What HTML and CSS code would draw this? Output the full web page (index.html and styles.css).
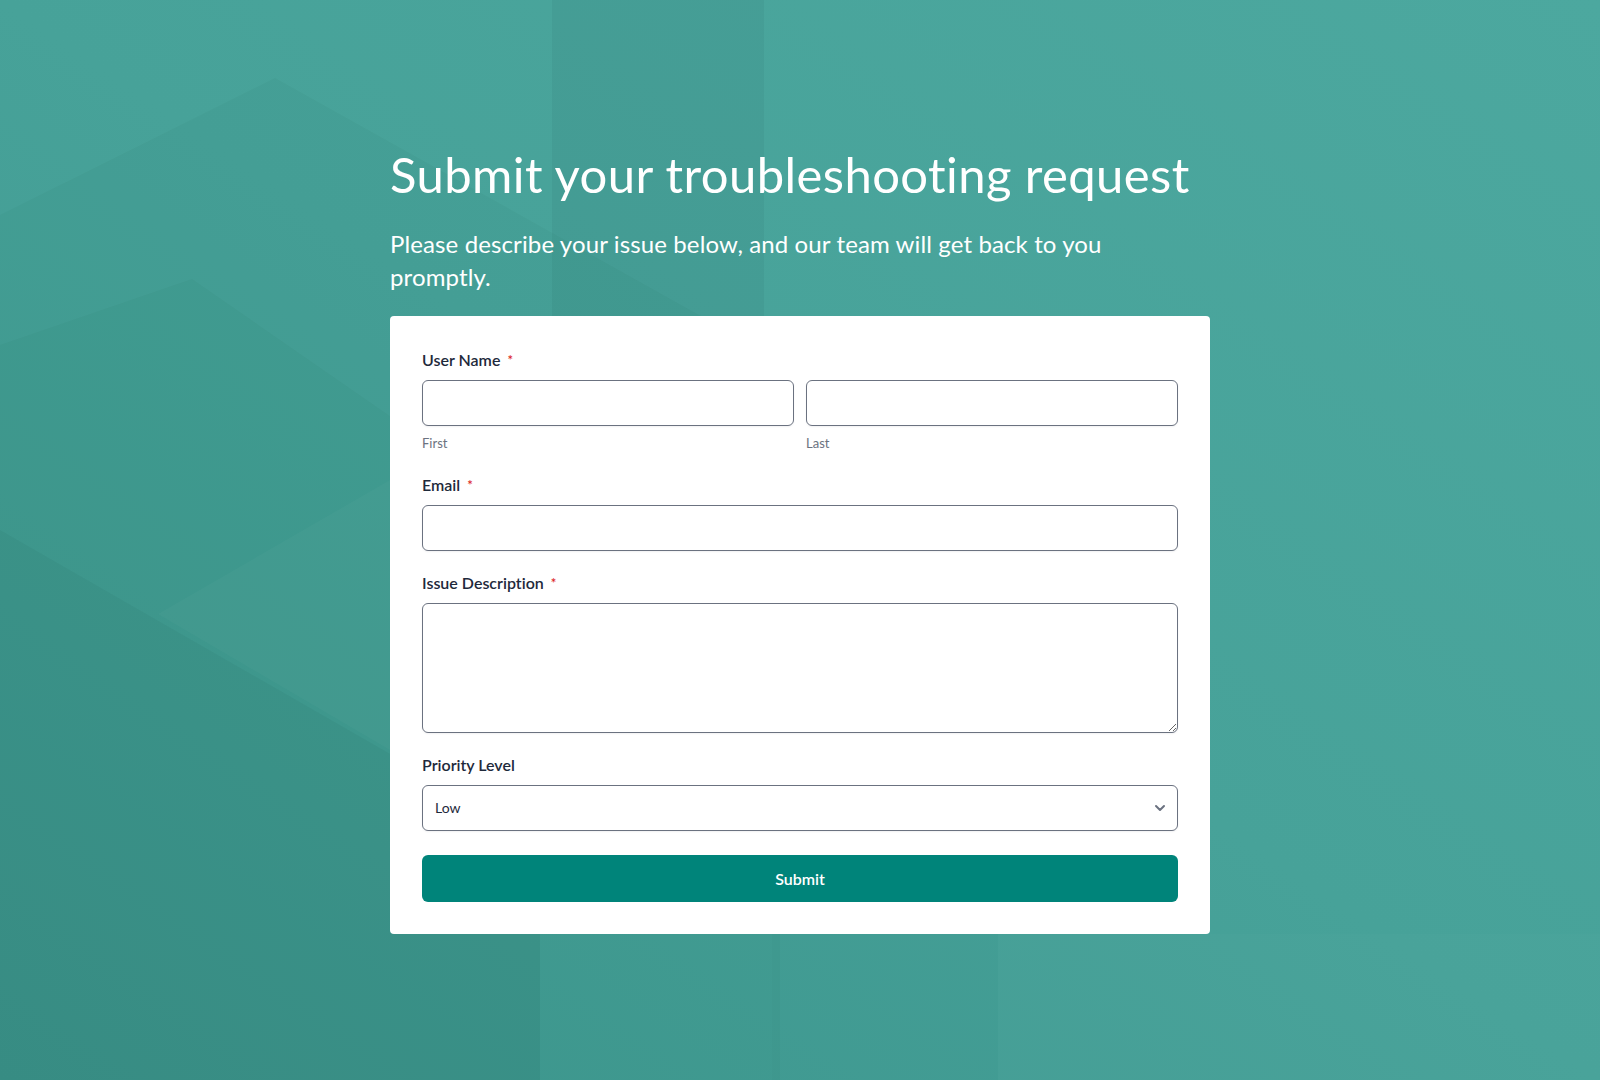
FILE: index.html
```html
<!DOCTYPE html>
<html lang="en">
<head>
<meta charset="utf-8">
<title>Submit your troubleshooting request</title>
<link rel="stylesheet" href="styles.css">
</head>
<body>
<svg class="bg" viewBox="0 0 1600 1080" preserveAspectRatio="none" aria-hidden="true">
  <defs>
    <linearGradient id="g" x1="1" y1="0" x2="0" y2="1">
      <stop offset="0" stop-color="#4ca89f"/>
      <stop offset="0.5" stop-color="#47a299"/>
      <stop offset="1" stop-color="#3e978f"/>
    </linearGradient>
  </defs>
  <rect width="1600" height="1080" fill="url(#g)"/>
  <polygon points="552,0 764,0 764,317 552,317" fill="#00302c" opacity="0.05"/>
  <polygon points="0,215 275,78 690,310 780,360 780,1080 0,1080" fill="#00302c" opacity="0.03"/>
  <polygon points="0,345 192,279 540,520 540,1080 0,1080" fill="#00302c" opacity="0.03"/>
  <polygon points="0,530 540,840 540,1080 0,1080" fill="#00302c" opacity="0.045"/>
  <polygon points="158,614 390,480 390,750" fill="#ffffff" opacity="0.025"/>
  <polygon points="772,934 998,934 998,1080 772,1080" fill="#00302c" opacity="0.015"/>
  <polygon points="998,934 1600,934 1600,1080 998,1080" fill="#ffffff" opacity="0.015"/>
</svg>
<main class="page">
  <h1 class="title">Submit your troubleshooting request</h1>
  <p class="subtitle">Please describe your issue below, and our team will get back to you promptly.</p>
  <form class="card">
    <div class="field">
      <label class="label">User Name <span class="req">*</span></label>
      <div class="name-row">
        <div class="name-col">
          <input class="input" type="text">
          <span class="sublabel">First</span>
        </div>
        <div class="name-col">
          <input class="input" type="text">
          <span class="sublabel">Last</span>
        </div>
      </div>
    </div>
    <div class="field">
      <label class="label">Email <span class="req">*</span></label>
      <input class="input" type="email">
    </div>
    <div class="field">
      <label class="label">Issue Description <span class="req">*</span></label>
      <textarea class="input textarea"></textarea>
    </div>
    <div class="field">
      <label class="label">Priority Level</label>
      <div class="select-wrap">
        <select class="input select">
          <option>Low</option>
          <option>Medium</option>
          <option>High</option>
        </select>
        <svg class="chevron" viewBox="0 0 12 8" aria-hidden="true"><path d="M2 2 L6 6 L10 2" fill="none" stroke="#6b7280" stroke-width="2" stroke-linecap="round" stroke-linejoin="round"/></svg>
      </div>
    </div>
    <button class="submit" type="button">Submit</button>
  </form>
</main>
</body>
</html>
```
FILE: styles.css
```css
* { box-sizing: border-box; }
html, body { margin: 0; padding: 0; }
body {
  min-height: 100vh;
  font-family: Lato, "Open Sans", "Liberation Sans", sans-serif;
  font-variant-ligatures: none;
  color: #1e293b;
  position: relative;
  overflow: hidden;
  background: #46a198;
}
.bg {
  position: absolute;
  inset: 0;
  width: 100%;
  height: 100%;
  z-index: 0;
}
.page {
  position: relative;
  z-index: 1;
  min-height: 100vh;
  display: flex;
  flex-direction: column;
  justify-content: center;
  width: 820px;
  margin: 0 auto;
}
.title {
  margin: 0 0 23px;
  font-size: 49px;
  line-height: 57.6px;
  font-weight: 400;
  letter-spacing: 0.4px;
  color: #ffffff;
  white-space: nowrap;
}
.subtitle {
  margin: 0 0 22px;
  max-width: 740px;
  font-size: 24px;
  line-height: 33.6px;
  font-weight: 400;
  letter-spacing: 0.12px;
  color: #ffffff;
}
.card {
  background: #ffffff;
  border-radius: 4px;
  padding: 32px;
  display: flex;
  flex-direction: column;
  gap: 20px;
}
.field {
  display: flex;
  flex-direction: column;
  gap: 8px;
}
.label {
  font-size: 16px;
  line-height: 24px;
  font-weight: 600;
  color: #1e293b;
}
.req {
  color: #dc2626;
  font-size: 13px;
  margin-left: 3px;
  vertical-align: 1px;
}
.name-row {
  display: grid;
  grid-template-columns: 1fr 1fr;
  gap: 12px;
}
.name-col {
  display: flex;
  flex-direction: column;
  gap: 7px;
}
.sublabel {
  font-size: 13px;
  line-height: 20px;
  color: #6b7280;
}
.input {
  display: block;
  width: 100%;
  height: 46px;
  margin: 0;
  border: 1px solid #6b7280;
  border-radius: 6px;
  background: #ffffff;
  box-shadow: 0 1px 2px rgba(15, 23, 42, 0.06);
  font-family: inherit;
  font-size: 14px;
  color: #1e293b;
  padding: 0 12px;
  outline: none;
}
.textarea {
  height: 130px;
  padding: 10px 12px;
  resize: vertical;
}
.select-wrap {
  position: relative;
}
.select {
  appearance: none;
  -webkit-appearance: none;
  padding: 0 40px 0 12px;
  font-size: 14px;
  color: #1e293b;
}
.chevron {
  position: absolute;
  right: 12px;
  top: 19px;
  width: 12px;
  height: 8px;
  pointer-events: none;
}
.submit {
  margin-top: 4px;
  height: 47px;
  width: 100%;
  border: 0;
  border-radius: 6px;
  background: #00847a;
  color: #ffffff;
  font-family: inherit;
  font-size: 16px;
  font-weight: 600;
  cursor: pointer;
}
```
